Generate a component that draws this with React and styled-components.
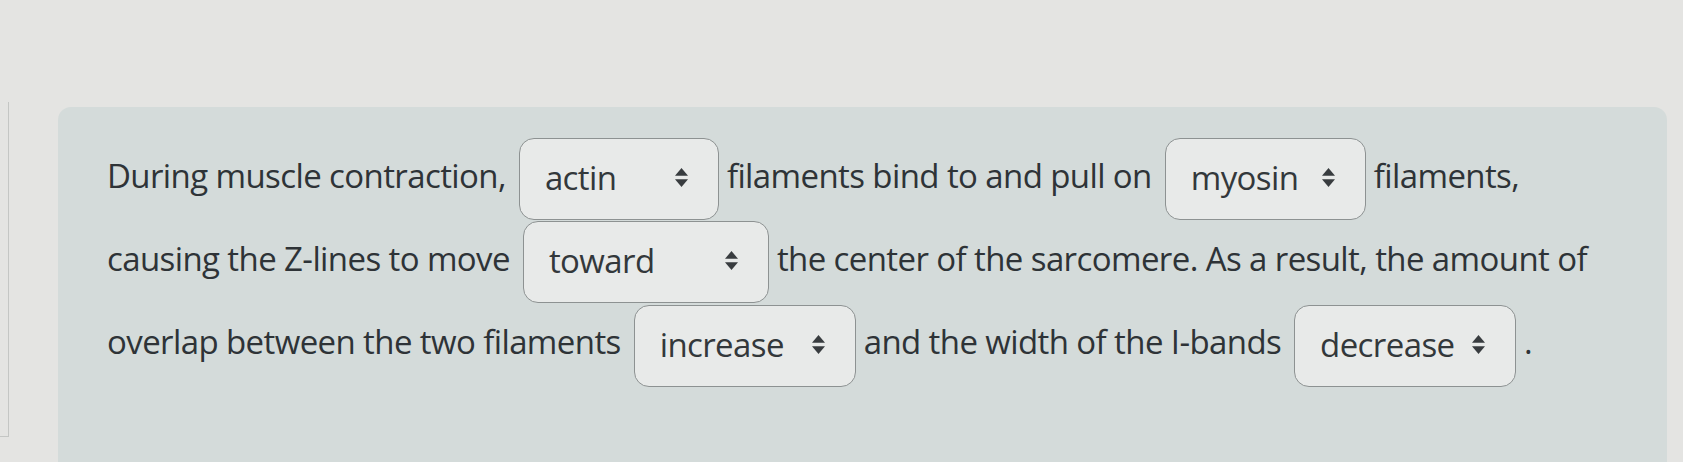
import React from "react";
import styled, { createGlobalStyle } from "styled-components";

const Global = createGlobalStyle`
  html, body {
    margin: 0;
    padding: 0;
    background-color: #e4e4e2;
    font-family: "Open Sans", "Noto Sans", sans-serif;
  }
`;

const Page = styled.div`
  width: 1683px;
  height: 462px;
  overflow: hidden;
  display: flex;
  align-items: flex-start;
  padding-top: 107px;
  box-sizing: border-box;
`;

const SideRule = styled.div`
  width: 8px;
  height: 334px;
  margin-top: -5px;
  margin-right: 49px;
  border-right: 1.5px solid #c4c6c4;
  border-bottom: 1.5px solid #c4c6c4;
  flex-shrink: 0;
`;

const Panel = styled.div`
  width: 1609px;
  flex-shrink: 0;
  background-color: #d4dbda;
  border-radius: 13px 13px 0 0;
  padding: 30px 30px 40px 49px;
  box-sizing: border-box;
  min-height: 400px;
`;

const Sentence = styled.p`
  margin: 0;
  font-size: 33px;
  line-height: 78px;
  color: #2e3337;
  letter-spacing: -0.6px;
  white-space: nowrap;
`;

const Select = styled.span`
  display: inline-flex;
  align-items: center;
  justify-content: space-between;
  box-sizing: border-box;
  width: ${(p) => p.$width}px;
  height: 82px;
  vertical-align: middle;
  margin: 0 8px 0 5px;
  padding: 0 30px 3px 25px;
  background-color: #e8eae9;
  border: 1.5px solid #8d9292;
  border-radius: 15px;
  line-height: 1;
  color: #33383b;
`;

const Arrows = () => (
  <svg width="13" height="19" viewBox="0 0 13 19">
    <path d="M6.5 0 L13 7.8 L0 7.8 Z" fill="#383c3f" />
    <path d="M0 11.2 L13 11.2 L6.5 19 Z" fill="#383c3f" />
  </svg>
);

const Dropdown = ({ value, width }) => (
  <Select $width={width}>
    <span>{value}</span>
    <Arrows />
  </Select>
);

export default function App() {
  return (
    <>
      <Global />
      <Page>
        <SideRule />
        <Panel>
          <Sentence>
            During muscle contraction, <Dropdown value="actin" width={200} />
            filaments bind to and pull on <Dropdown value="myosin" width={201} />
            filaments,
            <br />
            causing the Z-lines to move <Dropdown value="toward" width={246} />
            the center of the sarcomere. As a result, the amount of
            <br />
            overlap between the two filaments <Dropdown value="increase" width={222} />
            and the width of the I-bands <Dropdown value="decrease" width={222} />.
          </Sentence>
        </Panel>
      </Page>
    </>
  );
}
